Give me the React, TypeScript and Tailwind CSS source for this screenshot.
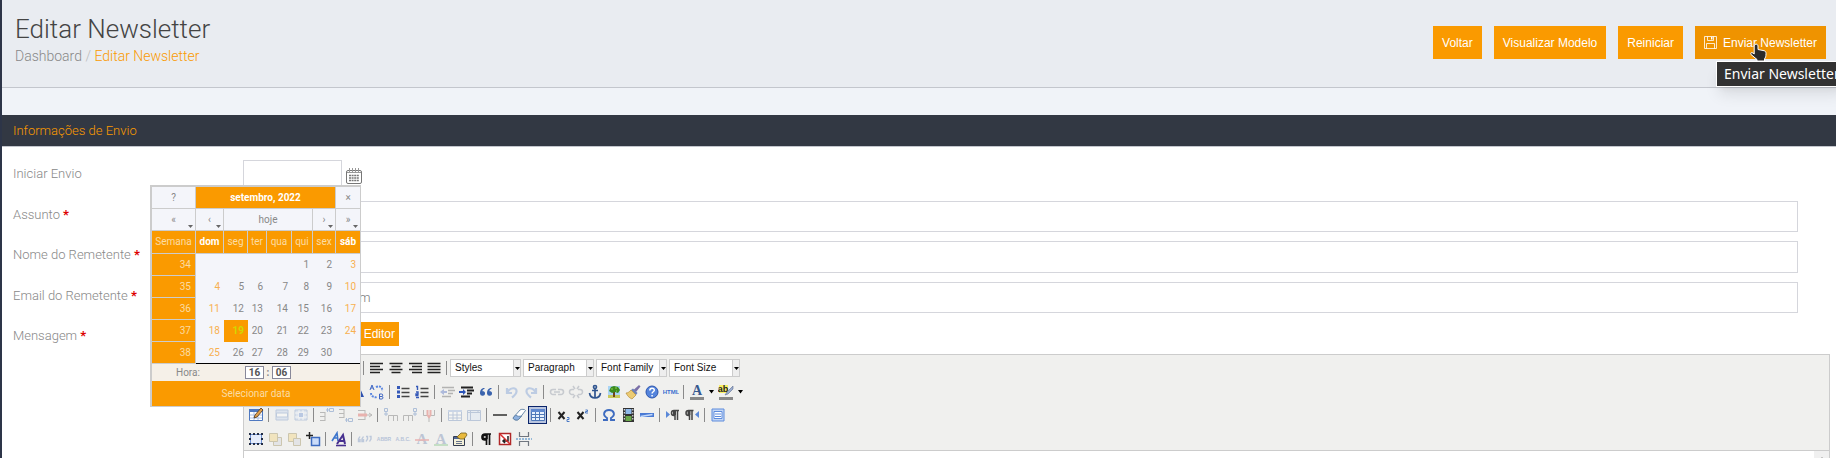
import { FC, ReactNode } from 'react';

const ORANGE_BUTTON = 'cursor-pointer bg-[#fa9a00] text-white';

const icons: Record<string, ReactNode> = {
  bold: <path d="M4 3h5a2.500 2.500 0 010 5H4zM4 8h6a2.500 2.500 0 010 5H4z" fill="none" stroke="#222" strokeWidth="2" />,
  italic: <path d="M7 3h5M4 13h5M9.500 3l-3 10" fill="none" stroke="#222" strokeWidth="1.500" />,
  underline: <path d="M4 2v6a4 4 0 008 0V2M3 14h10" fill="none" stroke="#222" strokeWidth="1.500" />,
  strike: <path d="M12 4c-2-2-7-2-7 1s7 2 7 5-6 3-8 1M2 8h12" fill="none" stroke="#222" />,
  page: <path d="M3.500 1.500h6l3 3v10h-9z" fill="#fff" stroke="#5577aa" />,
  cut: <path d="M4 2l6 9M12 2l-6 9M4 14a2 2 0 110-4 2 2 0 010 4zM12 14a2 2 0 110-4 2 2 0 010 4z" fill="none" stroke="#8aa0c8" />,
  paste: <path d="M3.500 3.500h9v11h-9zM6 2h4v3H6z" fill="#e8d49a" stroke="#8a7440" />,
  find: <path d="M2 13L7 2h2l5 11h-3l-1-3H6l-1 3z" fill="#2d52b0" />,
  replace: (
    <g>
      <path d="M1 6l2-5 2 5M2 4h2M10.500 10v5h2.500a1.300 1.300 0 000-2.500h-2.500 2a1.200 1.200 0 000-2.500z" fill="none" stroke="#3e66c4" />
      <path d="M7 3c4-2 7 1 6 4M2 9c0 3 3 5 6 4" fill="none" stroke="#5a86e0" strokeWidth="2" strokeDasharray="2 1" />
    </g>
  ),
  left: <path d="M1 3.500h13M1 6.500h10M1 9.500h13M1 12.500h10" stroke="#222" strokeWidth="1.700" />,
  center: <path d="M1.500 3.500h13M3.500 6.500h9M1.500 9.500h13M3.500 12.500h9" stroke="#222" strokeWidth="1.700" />,
  right: <path d="M2 3.500h13M5 6.500h10M2 9.500h13M5 12.500h10" stroke="#222" strokeWidth="1.700" />,
  justify: <path d="M1.500 3.500h13M1.500 6.500h13M1.500 9.500h13M1.500 12.500h13" stroke="#222" strokeWidth="1.700" />,
  bullets: (
    <g>
      <path d="M2 2h3v3H2zM2 6.500h3v3H2zM2 11h3v3H2z" fill="#3559b8" />
      <path d="M6.500 4.500h8M6.500 8.500h8M6.500 12.500h8" stroke="#444" strokeWidth="1.300" />
    </g>
  ),
  numbers: (
    <g>
      <path d="M2 2.500h1.500V6M2 8h2v2H2v1.500h2.500M2 13.500h3" fill="none" stroke="#3559b8" strokeWidth="1.400" />
      <path d="M6.500 4.500h8M6.500 8.500h8M6.500 12.500h8" stroke="#444" strokeWidth="1.300" />
    </g>
  ),
  outdent: (
    <g>
      <path d="M2 3.500h12M8 6.500h7M8 9.500h5M2 12.500h9" stroke="#444" strokeWidth="1.700" />
      <path d="M0 8l4-3v2h3v2H4v2z" fill="#3559b8" />
    </g>
  ),
  indent: (
    <g>
      <path d="M2 3.500h12M8 6.500h7M8 9.500h5M2 12.500h9" stroke="#222" strokeWidth="1.800" />
      <path d="M7 8L4 5v2H0v2h4v2z" fill="#2a53b8" />
    </g>
  ),
  quote: (
    <g fill="#3a63ad">
      <path d="M6.500 4C3 4 2 6.500 2 9.500a2.500 2.500 0 105-.5c0-1.500-1.500-2-2.500-1.800C4.500 6 5 5 6.500 5z" />
      <path d="M13.500 4C10 4 9 6.500 9 9.500a2.500 2.500 0 105-.5c0-1.500-1.500-2-2.500-1.800C11.500 6 12 5 13.500 5z" />
    </g>
  ),
  undo: <path d="M3 4v5h5M3.500 8.500C6 3 13 3 12.500 7.500 12.300 10 10 12 8 13.500" fill="none" stroke="#5f8ad0" strokeWidth="2.200" />,
  redo: <path d="M13 4v5H8M12.500 8.500C10 3 3 3 3.500 7.500 3.700 10 6 12 8 13.500" fill="none" stroke="#5f8ad0" strokeWidth="2.200" />,
  link: <path d="M7 10.500H4a2.500 2.500 0 010-5h3M9 5.500h3a2.500 2.500 0 010 5H9M5 8h6" fill="none" stroke="#7c8698" strokeWidth="1.600" />,
  unlink: <path d="M6 10.500H4a2.500 2.500 0 010-5h2M10 5.500h2a2.500 2.500 0 010 5h-2M5 2l2 3M11 2L9 5M5 14l2-3M11 14l-2-3" fill="none" stroke="#7c8698" strokeWidth="1.500" />,
  anchor: (
    <g fill="none" stroke="#2f548f" strokeWidth="1.700">
      <circle cx="8" cy="3" r="1.500" />
      <path d="M8 5v9M5 6.500h6M2.500 9c.5 3 2.500 5 5.500 5s5-2 5.500-5" />
    </g>
  ),
  image: (
    <g>
      <path d="M2 2h12v12H2z" fill="#a9d4f5" />
      <path d="M2 11h12v3H2z" fill="#c9c95a" />
      <path d="M7 8h2v5H7z" fill="#70451c" />
      <path d="M3 7l2-4 3-1 4 1 2 3-2 3-3-1-3 1z" fill="#3b8a1d" />
      <path d="M5 5h2M9 4h2M10 7h1" stroke="#8fd052" />
    </g>
  ),
  brush: (
    <g>
      <path d="M8.500 6L14 1l1.500 1.500L11 8z" fill="#7a6fa8" />
      <path d="M8 4.500L12.500 9 11 11 6 6z" fill="#6d82b8" />
      <path d="M6 6l5 5-4 4c-2-1-4-2-6-6 2 0 3-1 5-3z" fill="#eccb72" stroke="#b68c38" strokeWidth=".7" />
    </g>
  ),
  help: (
    <g>
      <circle cx="8" cy="8" r="6" fill="#5484dc" stroke="#2c55ad" />
      <path d="M5.800 6.500c0-3 4.500-3 4.500-.3 0 1.600-2.200 1.500-2.200 3.300M8.100 11v1.500" fill="none" stroke="#fff" strokeWidth="1.500" />
    </g>
  ),
  html: (
    <text x="8" y="10" textAnchor="middle" fontSize="6" fontWeight="700" fill="#3b6fd0">HTML</text>
  ),
  forecolor: (
    <g>
      <text x="8" y="11" textAnchor="middle" fontSize="14" fontWeight="700" fontFamily="Liberation Serif, serif" fill="#37598f">A</text>
      <path d="M1 13h14v3H1z" fill="#888" />
    </g>
  ),
  backcolor: (
    <g>
      <path d="M1 1h9v8H1z" fill="#f8ef62" />
      <text x="5" y="8" textAnchor="middle" fontSize="9" fontWeight="700" fill="#222">ab</text>
      <path d="M15 2L9 8l-2 3 3-1 5-5z" fill="#9aaccf" stroke="#607090" strokeWidth=".6" />
      <path d="M1 13h14v3H1z" fill="#888" />
    </g>
  ),
  table: (
    <g>
      <path d="M1.500 2.500h13v11h-13z" fill="#fff" stroke="#4e78c0" />
      <path d="M1 2h14v3H1z" fill="#4e78c0" />
      <path d="M2 8h12M2 11h12M6 5v8M10 5v8" stroke="#a8bfe6" />
      <path d="M6 11l1-3 6-7 2 2-6 7z" fill="#e0a04e" stroke="#4c351c" strokeWidth=".8" />
    </g>
  ),
  rowprops: (
    <g>
      <path d="M2 3h12v10H2z" fill="#bcd0ee" stroke="#6487c0" />
      <path d="M2.500 6h11v4h-11z" fill="#fff" stroke="#6487c0" />
    </g>
  ),
  cellprops: (
    <g>
      <path d="M2 3h12v10H2z" fill="#bcd0ee" stroke="#6487c0" />
      <path d="M2 6h12M2 10h12M6 3v10M10 3v10" stroke="#fff" />
      <path d="M6 6h4v4H6z" fill="#5680cc" />
    </g>
  ),
  rowbefore: (
    <g fill="none">
      <path d="M1 5.500h5M1 9.500h5M1 13.500h5M6 5v9" stroke="#555" />
      <path d="M10.500 1.500h4v3h-4zM7 3h3M8.500 1v4" stroke="#3565b0" />
    </g>
  ),
  rowafter: (
    <g fill="none">
      <path d="M1 2.500h5M1 6.500h5M1 10.500h5M6 2v9" stroke="#555" />
      <path d="M10.500 11.500h4v3h-4zM7 13h3M8.500 11v4" stroke="#3565b0" />
    </g>
  ),
  rowdel: (
    <g>
      <path d="M1 3.500h7M1 12.500h7M8 3v10" stroke="#555" fill="none" />
      <path d="M1 6.500h9v3H1z" fill="#dc4038" />
      <path d="M10 8h5M12 6l3 2-3 2" stroke="#555" fill="none" />
    </g>
  ),
  colbefore: (
    <g fill="none">
      <path d="M5.500 14V8.500h9V14M10.500 8v6" stroke="#555" />
      <path d="M1.500 1.500h3v3h-3zM3 5v4M1 7h4" stroke="#3565b0" />
    </g>
  ),
  colafter: (
    <g fill="none">
      <path d="M1.500 14V8.500h9V14M6.500 8v6" stroke="#555" />
      <path d="M11.500 1.500h3v3h-3zM13 5v4M11 7h4" stroke="#3565b0" />
    </g>
  ),
  coldel: (
    <g fill="none">
      <path d="M2.500 3v5.500h4M13.500 3v5.500h-4M8 10v5" stroke="#555" />
      <path d="M6.500 3v5L8 10l1.500-2V3" stroke="#dc4038" strokeWidth="2" />
    </g>
  ),
  split: (
    <g>
      <path d="M1.500 3.500h13v10h-13z" fill="#fff" stroke="#5b7db5" />
      <path d="M1 3h14v2H1z" fill="#86a4da" />
      <path d="M2 8h12M2 11h12M6 5v8M10 5v8" stroke="#5b7db5" />
    </g>
  ),
  merge: (
    <g>
      <path d="M1.500 3.500h13v10h-13z" fill="#d5e2f8" stroke="#5b7db5" />
      <path d="M1 5.500h14M4.500 3v10M12 3v2" stroke="#5b7db5" />
    </g>
  ),
  hr: <path d="M1 8h14" stroke="#111" strokeWidth="1.300" />,
  eraser: (
    <g strokeWidth=".9" stroke="#5e80a4">
      <path d="M2 11l7-8c1-1 5-1 5.500.5L8 12c-1 1.500-5 1.500-6-1z" fill="#fff" />
      <path d="M2 11l2.500-3c2 1.500 4 1.500 6 1L8 12c-1 1.500-5 1.500-6-1z" fill="#8fb2e0" />
    </g>
  ),
  visualaid: (
    <g>
      <path d="M1.500 2.500h13v11h-13zM2 7.500h12M2 10.500h12M5.500 5v8M9.500 5v8" fill="#e8f0fd" stroke="#4f78b8" />
      <path d="M1 2h14v3H1z" fill="#5f88cf" />
    </g>
  ),
  sub: (
    <g>
      <path d="M2.500 5l6 7M8.500 5l-6 7" stroke="#222" strokeWidth="2" />
      <path d="M11 10.500h2v2h-2v2h2.500" stroke="#4a78c4" fill="none" />
    </g>
  ),
  sup: (
    <g>
      <path d="M2.500 5l6 7M8.500 5l-6 7" stroke="#222" strokeWidth="2" />
      <path d="M10.500 3h2v1.500h-2V6H13" stroke="#4a78c4" fill="none" />
    </g>
  ),
  charmap: <path d="M2 13h4v-2C1 8 3 3 8 3s7 5 2 8v2h4" fill="none" stroke="#3e6cc0" strokeWidth="1.900" />,
  media: (
    <g>
      <path d="M3 1h11v14H3z" fill="#333" />
      <path d="M5.500 2h6v5h-6z" fill="#8fb9ea" />
      <path d="M5.500 9h6v5h-6z" fill="#6aa84a" />
      <path d="M4.300 2v12M12.800 2v12" stroke="#fff" strokeDasharray="1.500 1.500" />
    </g>
  ),
  advhr: (
    <g>
      <path d="M1 6h14v4H1z" fill="#4a7ad4" />
      <path d="M1.500 9.500l12-2" stroke="#c3d9fa" strokeWidth="1.500" />
    </g>
  ),
  ltr: (
    <g>
      <path d="M1 4l4 3.500L1 11z" fill="#5a88d8" />
      <path d="M14 3.500H9a2.500 2.500 0 000 5h1V13M12.500 4v9" fill="none" stroke="#444" strokeWidth="1.500" />
      <path d="M8 4h3v4H8z" fill="#444" />
    </g>
  ),
  rtl: (
    <g>
      <path d="M15 4l-4 3.500 4 3.500z" fill="#5a88d8" />
      <path d="M9.500 3.500h-5a2.500 2.500 0 000 5h1V13M8 4v9" fill="none" stroke="#444" strokeWidth="1.500" />
      <path d="M3.500 4h3v4h-3z" fill="#444" />
    </g>
  ),
  fullscreen: (
    <g>
      <path d="M2 2h12v12H2z" fill="#c3d7f6" stroke="#5e8cdc" />
      <path d="M4 4.500h8v7H4z" fill="#fff" stroke="#5e8cdc" />
      <path d="M5 7h6M5 9.500h6" stroke="#5e8cdc" />
    </g>
  ),
  layer: (
    <g>
      <path d="M2.500 3.500h11v9h-11z" fill="#e5ecfb" stroke="#6c8fd0" />
      <path d="M1 2h2v2H1zM5 2h2v2H5zM9 2h2v2H9zM13 2h2v2h-2zM1 7h2v2H1zM13 7h2v2h-2zM1 12h2v2H1zM5 12h2v2H5zM9 12h2v2H9zM13 12h2v2h-2z" fill="#222c44" />
    </g>
  ),
  forward: (
    <g stroke="#8b7b3c">
      <path d="M6.500 6.500h8v8h-8z" fill="#ccd0d8" />
      <path d="M2.500 2.500h8v8h-8z" fill="#f3cf68" />
    </g>
  ),
  backward: (
    <g stroke="#8b7b3c">
      <path d="M2.500 2.500h8v8h-8z" fill="#f3cf68" />
      <path d="M7.500 7.500h7v7h-7z" fill="#ccd0d8" />
    </g>
  ),
  abslayer: (
    <g>
      <path d="M6.500 6.500h8v8h-8z" fill="#cbdcf9" stroke="#3d6bc0" strokeWidth="1.500" />
      <path d="M1 4.500h7M4.500 1v7" stroke="#222" strokeWidth="1.500" />
    </g>
  ),
  styleprops: (
    <g fill="none" strokeWidth="1.600">
      <path d="M1 10l5-8 1 8M3 7h4" stroke="#3e76cc" />
      <path d="M6 13l6-9 2 9M8.500 10H13" stroke="#47308f" strokeWidth="2" />
      <path d="M5 14.500h10" stroke="#47308f" />
    </g>
  ),
  cite: (
    <g fill="none" stroke="#5d7fb8" strokeWidth="1.400">
      <path d="M3 5.500L1.500 8v2.500H3V8M6.500 5.500L5 8v2.500h1.500V8M9 5.500h1.500V8L9 10.500M12.500 5.500H14V8l-1.500 2.500" />
    </g>
  ),
  abbr: (
    <text x="8" y="10" textAnchor="middle" fontSize="5" fontWeight="700" fill="#4a6fb0">ABBR</text>
  ),
  acronym: (
    <text x="8" y="10" textAnchor="middle" fontSize="5" fontWeight="700" fill="#4a6fb0">A.B.C.</text>
  ),
  del: (
    <g>
      <text x="8" y="13" textAnchor="middle" fontSize="15" fontFamily="Liberation Serif, serif" fontWeight="700" fill="#6078a8">A</text>
      <path d="M1 9h14" stroke="#e04040" strokeWidth="1.500" />
    </g>
  ),
  ins: (
    <g>
      <text x="8" y="13" textAnchor="middle" fontSize="15" fontFamily="Liberation Serif, serif" fontWeight="700" fill="#6078a8">A</text>
      <path d="M1 14h14" stroke="#4caf50" strokeWidth="1.500" />
    </g>
  ),
  attribs: (
    <g>
      <path d="M1.500 5.500h11v9h-11z" fill="#f3f0d8" stroke="#333c50" />
      <path d="M2 6h10v2H2z" fill="#4d6496" />
      <path d="M4 10.500h6M4 12.500h6" stroke="#66728c" />
      <path d="M5 6l4-4h5l1 2-3 4H8z" fill="#e8b93c" stroke="#75601e" strokeWidth=".8" />
    </g>
  ),
  visualchars: <path d="M13 3H7a3 3 0 000 6h1M8.500 3v11M11.500 3v11M5 4.500h4v3H5z" fill="none" stroke="#111" strokeWidth="1.700" />,
  nonbreaking: (
    <g>
      <path d="M2.500 2.500h11v11h-11z" fill="#fff" stroke="#b02828" strokeWidth="1.500" />
      <path d="M11 5v5H6M8 8l-2 2 2 2" fill="none" stroke="#222" strokeWidth="1.500" />
      <path d="M3 3l10 10" stroke="#d82c2c" strokeWidth="1.500" />
    </g>
  ),
  pagebreak: (
    <g fill="none">
      <path d="M3.500 1v4.500h9V1M3.500 15v-4.500h9V15" stroke="#70767f" strokeWidth="1.200" />
      <path d="M0 8h16" stroke="#3b82c4" strokeDasharray="2 1" />
    </g>
  ),
};

// "|" is a separator, "-" in front of a name marks a disabled button
const toolbarRows = [
  'page bold italic underline strike page | left center right justify |',
  'cut page paste paste paste | find replace | bullets numbers | -outdent indent quote | -undo -redo | -link -unlink anchor image brush help html | forecolor backcolor',
  'table | -rowprops -cellprops | -rowbefore -rowafter -rowdel | -colbefore -colafter -coldel | -split -merge | hr eraser visualaid | sub sup | charmap media advhr | ltr rtl | fullscreen',
  'layer -forward -backward abslayer | styleprops | -cite -abbr -acronym -del -ins attribs | visualchars nonbreaking pagebreak',
].map((row) => row.split(' '));

const listBoxes = ['Styles', 'Paragraph', 'Font Family', 'Font Size'];

const ToolbarItem: FC<{ item: string }> = ({ item }) => {
  if (item === '|') {
    return (
      <span className="flex w-[7px] shrink-0 justify-center">
        <span className="h-[14px] w-px bg-[#8a8a8a]" />
      </span>
    );
  }

  const disabled = item.startsWith('-');
  const name = item.replace('-', '');
  const isActive = name === 'visualaid';
  const hasMenu = name === 'forecolor' || name === 'backcolor';

  return (
    <>
      <button
        type="button"
        aria-label={name}
        disabled={disabled}
        className={`flex h-[18px] w-[19px] shrink-0 items-center justify-center ${disabled ? 'opacity-35' : ''} ${
          isActive ? 'bg-[#b9c5df] outline-1 -outline-offset-1 outline-[#0a246a]' : ''
        }`}
      >
        <svg className="h-4 w-4" viewBox="0 0 16 16" fontFamily="Liberation Sans, sans-serif">
          {icons[name]}
        </svg>
      </button>
      {hasMenu && (
        <button type="button" aria-label={`${name} menu`} className="flex w-[10px] shrink-0 justify-center">
          <svg className="h-1 w-[5px]" viewBox="0 0 5 4">
            <path d="M0 0h5L2.500 3.500z" fill="#000" />
          </svg>
        </button>
      )}
    </>
  );
};

const ListBox: FC<{ label: string }> = ({ label }) => (
  <span className="relative flex h-[18px] w-[71px] shrink-0 border border-[#ccc] bg-white">
    <select
      aria-label={label}
      className="w-full appearance-none pl-1 font-['Liberation_Sans',Arial,sans-serif] text-[10px] leading-4 text-[#111] outline-none"
    >
      <option>{label}</option>
    </select>
    <span className="pointer-events-none absolute inset-y-0 right-0 flex w-[7px] items-center justify-center border-l border-[#ccc] bg-[#eee]">
      <svg className="h-[3px] w-[5px]" viewBox="0 0 5 3">
        <path d="M0 0h5L2.500 3z" fill="#000" />
      </svg>
    </span>
  </span>
);

const Editor: FC = () => (
  <div className="border border-[#ccc]">
    <div className="border-b border-[#ccc] bg-[#f0f0ee] pt-px pl-[2px]">
      {toolbarRows.map((row, rowIndex) => (
        <div key={rowIndex} className="flex h-[23px] items-center odd:h-6">
          {row.map((item, i) => (
            <ToolbarItem key={i} item={item} />
          ))}
          {rowIndex === 0 && (
            <div className="flex gap-[2px]">
              {listBoxes.map((label) => (
                <ListBox key={label} label={label} />
              ))}
            </div>
          )}
        </div>
      ))}
    </div>
    <div className="flex h-20">
      <textarea aria-label="Mensagem" className="flex-1 resize-none outline-none" />
      <div className="flex w-[15px] justify-center bg-[#f0f0f0] pt-[6px]">
        <svg className="h-1 w-2" viewBox="0 0 8 4">
          <path d="M0 4h8L4 0z" fill="#999" />
        </svg>
      </div>
    </div>
  </div>
);

const weekDays = ['dom', 'seg', 'ter', 'qua', 'qui', 'sex', 'sáb'];
const weeks = [
  { number: 34, days: ['', '', '', '', '1', '2', '3'] },
  { number: 35, days: ['4', '5', '6', '7', '8', '9', '10'] },
  { number: 36, days: ['11', '12', '13', '14', '15', '16', '17'] },
  { number: 37, days: ['18', '19', '20', '21', '22', '23', '24'] },
  { number: 38, days: ['25', '26', '27', '28', '29', '30', ''] },
];

const dayColor = (day: string, column: number) => {
  if (day === '19') return 'bg-[#fa9a00] font-bold text-[#d2d800]';
  return column === 0 || column === 6 ? 'text-[#f8b050]' : 'text-[#888]';
};

const NavCell: FC<{ children: ReactNode; label: string; menu?: boolean; last?: boolean }> = ({ children, label, menu, last }) => (
  <td className={`h-[22px] border-b border-[#ccc] p-0 ${last ? '' : 'border-r'}`}>
    <button type="button" aria-label={label} className="relative block h-[21px] w-full text-center">
      {children}
      {menu && (
        <svg className="absolute right-[2px] bottom-[2px] h-[3px] w-[5px]" viewBox="0 0 5 3">
          <path d="M0 0h5L2.500 3z" fill="#666" />
        </svg>
      )}
    </button>
  </td>
);

const Calendar: FC = () => (
  <div className="absolute top-[185px] left-[150px] w-[211px] border-t-2 border-r border-b border-l-2 border-[#ccc] bg-[#f4f5fa] text-[10px] leading-3 text-[#888]">
    <table className="w-full table-fixed border-separate border-spacing-0">
      <colgroup>
        <col className="w-[44px]" />
        <col className="w-[28px]" />
        <col className="w-[24px]" />
        <col className="w-[19px]" />
        <col className="w-[25px]" />
        <col className="w-[21px]" />
        <col className="w-[23px]" />
        <col className="w-[24px]" />
      </colgroup>
      <thead>
        <tr>
          <NavCell label="Ajuda">?</NavCell>
          <td colSpan={6} className="border-r border-b border-[#ccc] bg-[#fa9a00] p-0 text-center font-bold text-white">
            setembro, 2022
          </td>
          <NavCell label="Fechar" last>×</NavCell>
        </tr>
        <tr>
          <NavCell label="Ano anterior" menu>«</NavCell>
          <NavCell label="Mês anterior" menu>‹</NavCell>
          <td colSpan={4} className="border-r border-b border-[#ccc] p-0">
            <button type="button" className="block w-full text-center">hoje</button>
          </td>
          <NavCell label="Próximo mês" menu>›</NavCell>
          <NavCell label="Próximo ano" menu last>»</NavCell>
        </tr>
        <tr className="bg-[#fa9a00] text-[#fbdca4]">
          <th className="h-[23px] border-r border-b border-[#ccc] p-0 font-normal">Semana</th>
          {weekDays.map((day, i) => (
            <th
              key={day}
              className={`border-b border-[#ccc] p-0 ${i === 6 ? '' : 'border-r'} ${
                i === 0 || i === 6 ? 'font-bold text-white' : 'font-normal'
              }`}
            >
              {day}
            </th>
          ))}
        </tr>
      </thead>
      <tbody>
        {weeks.map((week) => (
          <tr key={week.number} className="text-right">
            <td className="h-[22px] border-r border-b border-[#ccc] bg-[#fa9a00] py-0 pr-1 pl-0 text-[#fbdca4]">{week.number}</td>
            {week.days.map((day, i) => (
              <td
                key={i}
                className={`py-0 pr-1 pl-0 ${dayColor(day, i)} ${week.number === 38 ? 'border-b border-black' : ''}`}
              >
                {day}
              </td>
            ))}
          </tr>
        ))}
      </tbody>
    </table>
    <div className="flex h-[17px] items-center bg-[#f5f0e8] pl-6">
      <span className="w-[69px]">Hora:</span>
      <button type="button" className="w-[19px] border border-[#889] bg-white text-center leading-[11px] font-bold text-[#555]">16</button>
      <span className="w-2 text-center font-bold">:</span>
      <button type="button" className="w-[19px] border border-[#889] bg-white text-center leading-[11px] font-bold text-[#555]">06</button>
    </div>
    <button type="button" className="block h-[25px] w-full cursor-pointer bg-[#fa9a00] text-[#fbdca4]">
      Selecionar data
    </button>
  </div>
);

const Field: FC<{ id: string; label: string; required?: boolean; children: ReactNode }> = ({ id, label, required, children }) => (
  <div className="flex h-[31px] odd:h-8">
    <label htmlFor={id} className="w-[230px] shrink-0 pt-1 text-[13px] leading-5 font-light text-[#888]">
      {label} {required && <span className="font-bold text-[#d00]">*</span>}
    </label>
    {children}
  </div>
);

const INPUT = 'h-full border border-[#d5d6dc] bg-white px-2 text-[13px] font-light text-[#777] outline-none';

const Header: FC = () => (
  <header className="flex h-[88px] justify-between border-b border-[#c3c6cd] bg-[#e9ecf1] pr-[10px] pl-[13px]">
    <div className="pt-[13px]">
      <h1 className="text-[26px] leading-8 font-light text-[#444]">Editar Newsletter</h1>
      <nav className="text-[14px] leading-[22px] font-light text-[#888]">
        <a href="#">Dashboard</a> <span className="text-[#bbb]">/</span>{' '}
        <a href="#" className="text-[#fa9a00]">Editar Newsletter</a>
      </nav>
    </div>
    <div className="flex gap-3 pt-[26px] font-['Liberation_Sans',Arial,sans-serif] text-[12px]">
      <button type="button" className={`h-[33px] px-[9px] ${ORANGE_BUTTON}`}>Voltar</button>
      <button type="button" className={`h-[33px] px-[9px] ${ORANGE_BUTTON}`}>Visualizar Modelo</button>
      <button type="button" className={`h-[33px] px-[9px] ${ORANGE_BUTTON}`}>Reiniciar</button>
      <div className="relative">
        <button type="submit" className="flex h-[33px] cursor-pointer items-center gap-[6px] bg-[#ef9300] px-[9px] text-white">
          <svg className="h-[13px] w-[13px]" viewBox="0 0 13 13" fill="none" stroke="#fff" strokeOpacity=".8">
            <path d="M.5.500h12v12H.5zM3.500.500v4h6v-4M2.500 12.500v-5h8v5" />
            <path d="M7 1h1.500v2.500H7z" fill="#fff" stroke="none" />
          </svg>
          Enviar Newsletter
        </button>
        <div
          role="tooltip"
          className="absolute top-[35px] left-[21px] z-10 border border-white bg-[#323232] px-[7px] font-['Noto_Sans',sans-serif] text-[14px] leading-6 whitespace-nowrap text-white shadow-lg"
        >
          Enviar Newsletter
        </div>
        <svg className="absolute top-[17px] left-[54px] z-20 h-[19px] w-[18px]" viewBox="0 0 18 19">
          <path
            d="M6 1.500c1.500-1 3 0 3 1.500v3.500l6 1.200c1.500.3 2 1.300 2 2.800 0 3-.5 4-1.500 5.500V18H8v-1.500L2 11.500c-1-1.500.5-2.500 2-1.500l1.200 1V3c0-.8.300-1.200.8-1.500z"
            fill="#2b2b2b"
            stroke="#fff"
          />
        </svg>
      </div>
    </div>
  </header>
);

export default function App() {
  return (
    <div className="relative h-screen overflow-hidden border-l-2 border-[#2d3548] bg-white font-['Roboto',sans-serif]">
      <Header />
      <div className="h-[27px] bg-[#f0f3f8]" />
      <h2 className="h-8 border-b border-[#c3c6cd] bg-[#323843] pl-[11px] text-[13px] leading-[31px] font-light text-[#fa9a00]">
        Informações de Envio
      </h2>
      <form className="flex flex-col gap-[9px] pt-[13px] pr-[6px] pl-[11px]">
        <Field id="start" label="Iniciar Envio">
          <input id="start" type="text" className={`w-[99px] ${INPUT}`} />
          <button type="button" aria-label="Abrir calendário" className="ml-1 self-start pt-2">
            <svg className="h-4 w-4" viewBox="0 0 16 16" fill="none" stroke="#777">
              <rect x=".5" y="2.500" width="15" height="13" rx="1.500" />
              <path d="M3.500 0v4M6.500 0v4M9.500 0v4M12.500 0v4M1 4.500h14" stroke="#999" />
              <path d="M3 7.500h10M3 10h10M3 12.500h10" strokeWidth="1.500" strokeDasharray="2 .6" />
            </svg>
          </button>
        </Field>
        <Field id="subject" label="Assunto" required>
          <input id="subject" type="text" className={`mr-8 flex-1 ${INPUT}`} />
        </Field>
        <Field id="sender" label="Nome do Remetente" required>
          <input id="sender" type="text" className={`mr-8 flex-1 ${INPUT}`} />
        </Field>
        <Field id="email" label="Email do Remetente" required>
          <input id="email" type="email" defaultValue="geral@empresa.com" className={`mr-8 flex-1 ${INPUT}`} />
        </Field>
        <div className="flex">
          <span className="w-[230px] shrink-0 pt-1 text-[13px] leading-5 font-light text-[#888]">
            Mensagem <span className="font-bold text-[#d00]">*</span>
          </span>
          <div className="min-w-0 flex-1">
            <button
              type="button"
              className={`mb-2 block h-6 w-[156px] pr-1 text-right font-['Liberation_Sans',Arial,sans-serif] text-[12px] ${ORANGE_BUTTON}`}
            >
              Mostrar / Ocultar Editor
            </button>
            <Editor />
          </div>
        </div>
      </form>
      {/* left/top are measured from inside the 2px side border */}
      <div className="absolute top-0 -left-[2px]">
        <Calendar />
      </div>
    </div>
  );
}
